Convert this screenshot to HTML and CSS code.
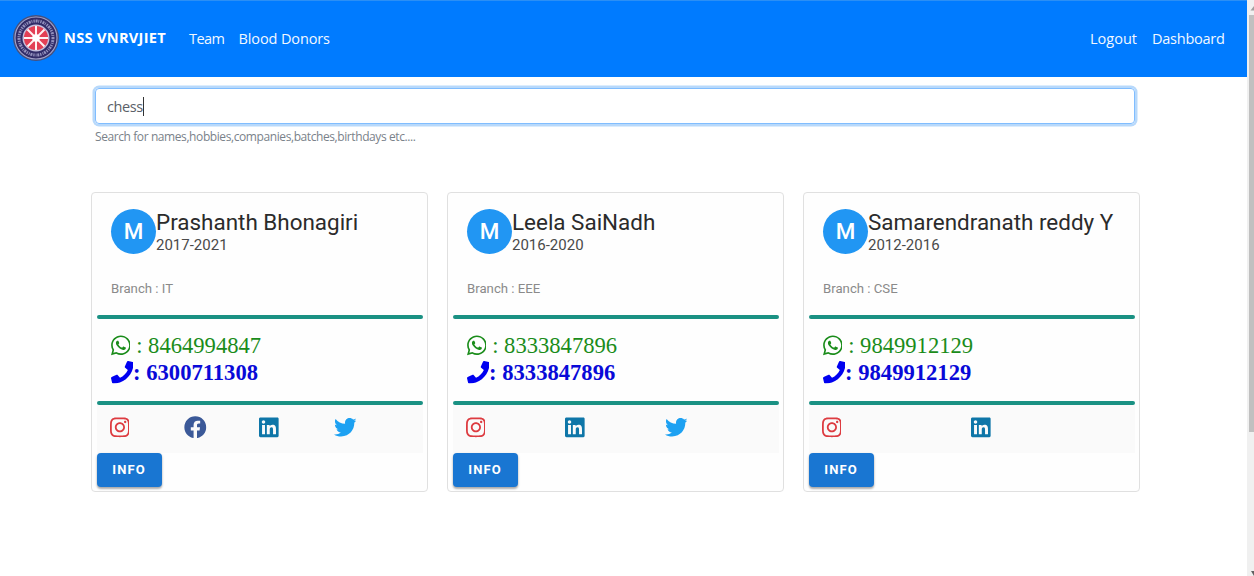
FILE: index.html
```html
<!DOCTYPE html>
<html lang="en">
<head>
<meta charset="utf-8">
<title>NSS VNRVJIET</title>
<link rel="stylesheet" href="styles.css">
</head>
<body>
<svg class="sprite" aria-hidden="true">
  <symbol id="whatsapp" viewBox="0 0 448 512"><path d="M380.9 97.1C339 55.1 283.2 32 223.9 32c-122.4 0-222 99.6-222 222 0 39.1 10.2 77.3 29.6 111L0 480l117.7-30.9c32.4 17.7 68.9 27 106.1 27h.1c122.3 0 224.1-99.6 224.1-222 0-59.3-25.2-115-67.1-157zm-157 341.6c-33.2 0-65.7-8.9-94-25.7l-6.7-4-69.8 18.3L72 359.2l-4.4-7c-18.5-29.4-28.2-63.3-28.2-98.2 0-101.7 82.8-184.5 184.6-184.5 49.3 0 95.6 19.2 130.4 54.1 34.8 34.9 56.2 81.2 56.1 130.5 0 101.8-84.9 184.6-186.6 184.6zm101.2-138.2c-5.5-2.8-32.8-16.2-37.9-18-5.1-1.9-8.8-2.8-12.5 2.8-3.7 5.6-14.3 18-17.6 21.8-3.2 3.7-6.5 4.2-12 1.4-32.6-16.3-54-29.1-75.5-66-5.7-9.8 5.7-9.1 16.3-30.3 1.8-3.7.9-6.9-.5-9.7-1.4-2.8-12.5-30.1-17.1-41.2-4.5-10.8-9.1-9.3-12.5-9.5-3.2-.2-6.9-.2-10.6-.2-3.7 0-9.7 1.4-14.8 6.9-5.1 5.6-19.4 19-19.4 46.3 0 27.3 19.9 53.7 22.6 57.4 2.8 3.7 39.1 59.7 94.8 83.8 35.2 15.2 49 16.5 66.6 13.9 10.7-1.6 32.8-13.4 37.4-26.4 4.6-13 4.6-24.1 3.2-26.4-1.3-2.5-5-3.9-10.5-6.6z"/></symbol>
  <symbol id="phone" viewBox="0 0 512 512"><path d="M493.4 24.6l-104-24c-11.3-2.6-22.9 3.3-27.5 13.9l-48 112c-4.2 9.8-1.4 21.3 6.9 28l60.6 49.6c-36 76.7-98.9 140.5-177.2 177.2l-49.6-60.6c-6.8-8.3-18.2-11.1-28-6.9l-112 48C3.9 366.5-2 378.1.6 389.4l24 104C27.1 504.2 36.7 512 48 512c256.1 0 464-207.5 464-464 0-11.2-7.7-20.9-18.6-23.4z"/></symbol>
  <symbol id="instagram" viewBox="0 0 448 512"><path d="M224.1 141c-63.6 0-114.9 51.3-114.9 114.9s51.3 114.9 114.9 114.9S339 319.5 339 255.9 287.7 141 224.1 141zm0 189.600c-41.100 0-74.700-33.500-74.700-74.700s33.500-74.700 74.700-74.700 74.700 33.500 74.700 74.700-33.600 74.700-74.700 74.700zm146.400-194.300c0 14.900-12 26.800-26.800 26.800-14.900 0-26.800-12-26.800-26.800s12-26.800 26.800-26.800 26.800 12 26.800 26.800zm76.100 27.200c-1.700-35.900-9.900-67.700-36.200-93.900-26.200-26.200-58-34.400-93.900-36.200-37-2.100-147.900-2.100-184.900 0-35.800 1.700-67.600 9.900-93.900 36.100s-34.400 58-36.200 93.900c-2.100 37-2.100 147.900 0 184.900 1.700 35.900 9.900 67.700 36.200 93.900s58 34.400 93.900 36.200c37 2.100 147.900 2.100 184.900 0 35.900-1.700 67.700-9.900 93.900-36.200 26.200-26.200 34.400-58 36.200-93.900 2.100-37 2.100-147.800 0-184.800zM398.800 388c-7.800 19.600-22.900 34.700-42.600 42.600-29.500 11.700-99.500 9-132.100 9s-102.700 2.600-132.100-9c-19.600-7.800-34.700-22.900-42.600-42.600-11.700-29.500-9-99.500-9-132.100s-2.600-102.700 9-132.100c7.800-19.600 22.900-34.700 42.600-42.600 29.500-11.700 99.500-9 132.100-9s102.700-2.600 132.100 9c19.600 7.800 34.700 22.900 42.600 42.600 11.700 29.500 9 99.500 9 132.100s2.700 102.700-9 132.100z"/></symbol>
  <symbol id="facebook" viewBox="0 0 512 512"><path d="M504 256C504 119 393 8 256 8S8 119 8 256c0 123.780 90.690 226.380 209.250 245V327.690h-63V256h63v-54.640c0-62.150 37-96.480 93.670-96.480 27.140 0 55.520 4.840 55.520 4.840v61h-31.280c-30.800 0-40.410 19.120-40.410 38.730V256h68.780l-11 71.690h-57.780V501C413.310 482.380 504 379.780 504 256z"/></symbol>
  <symbol id="linkedin" viewBox="0 0 448 512"><path d="M416 32H31.900C14.300 32 0 46.500 0 64.300v383.400C0 465.500 14.300 480 31.900 480H416c17.600 0 32-14.500 32-32.300V64.300c0-17.800-14.400-32.300-32-32.300zM135.400 416H69V202.200h66.500V416zm-33.200-243c-21.300 0-38.500-17.300-38.500-38.500S80.900 96 102.200 96c21.200 0 38.500 17.300 38.500 38.500 0 21.300-17.200 38.500-38.500 38.500zm282.100 243h-66.400V312c0-24.800-.5-56.700-34.500-56.700-34.600 0-39.900 27-39.900 54.900V416h-66.400V202.200h63.700v29.200h.9c8.900-16.800 30.600-34.500 62.900-34.500 67.200 0 79.700 44.300 79.700 101.900V416z"/></symbol>
  <symbol id="twitter" viewBox="0 0 512 512"><path d="M459.370 151.716c.325 4.548.325 9.097.325 13.645 0 138.720-105.583 298.558-298.558 298.558-59.452 0-114.680-17.219-161.137-47.106 8.447.974 16.568 1.299 25.340 1.299 49.055 0 94.213-16.568 130.274-44.832-46.132-.975-84.792-31.188-98.112-72.772 6.498.974 12.995 1.624 19.818 1.624 9.421 0 18.843-1.300 27.614-3.573-48.081-9.747-84.143-51.980-84.143-102.985v-1.299c13.969 7.797 30.214 12.670 47.431 13.319-28.264-18.843-46.781-51.005-46.781-87.391 0-19.492 5.197-37.360 14.294-52.954 51.655 63.675 129.300 105.258 216.365 109.807-1.624-7.797-2.599-15.918-2.599-24.040 0-57.828 46.782-104.934 104.934-104.934 30.213 0 57.502 12.670 76.670 33.137 23.715-4.548 46.456-13.320 66.599-25.340-7.798 24.366-24.366 44.833-46.132 57.827 21.117-2.273 41.584-8.122 60.426-16.243-14.292 20.791-32.161 39.308-52.628 54.253z"/></symbol>
</svg>

<div class="window">
  <div class="page">
    <nav class="navbar">
      <a class="brand">
        <svg class="logo" viewBox="0 0 46 46">
          <circle cx="23" cy="23" r="23" fill="#45517f"/>
          <circle cx="23" cy="23" r="21" fill="#312c68" stroke="#a5a4cb" stroke-width="1.1"/>
          <circle class="motto" cx="23" cy="23" r="17"/>
          <circle cx="23" cy="23" r="12.8" fill="#e33f55" stroke="#c5bfdc" stroke-width="1.4"/>
          <g stroke="#fff1f3" stroke-width="2">
            <path d="M23 11v24M11 23h24M14.500 14.500l17 17M31.500 14.500l-17 17"/>
          </g>
          <circle cx="23" cy="23" r="3.8" fill="#fff"/>
        </svg>
        <span class="brand-name">NSS VNRVJIET</span>
      </a>
      <a class="link team">Team</a>
      <a class="link donors">Blood Donors</a>
      <a class="link logout">Logout</a>
      <a class="link dashboard">Dashboard</a>
    </nav>

    <main class="content">
      <div class="search"><span class="query">chess</span><span class="caret"></span></div>
      <p class="hint">Search for names,hobbies,companies,batches,birthdays etc....</p>

      <div class="cards">
        <article class="card">
          <header class="person">
            <div class="avatar">M</div>
            <div class="who"><h2 class="name">Prashanth Bhonagiri</h2><div class="years">2017-2021</div></div>
          </header>
          <div class="branch">Branch : IT</div>
          <div class="bar"></div>
          <div class="contact">
            <div class="line whatsapp"><svg class="ic"><use href="#whatsapp"/></svg><span class="num">: 8464994847</span></div>
            <div class="line phone"><svg class="ic wide"><use href="#phone"/></svg><span>: 6300711308</span></div>
          </div>
          <div class="bar"></div>
          <div class="social">
            <svg class="ic insta"><use href="#instagram"/></svg>
            <svg class="ic wide fb"><use href="#facebook"/></svg>
            <svg class="ic in"><use href="#linkedin"/></svg>
            <svg class="ic wide tw"><use href="#twitter"/></svg>
          </div>
          <button class="info">INFO</button>
        </article>

        <article class="card">
          <header class="person">
            <div class="avatar">M</div>
            <div class="who"><h2 class="name">Leela SaiNadh</h2><div class="years">2016-2020</div></div>
          </header>
          <div class="branch">Branch : EEE</div>
          <div class="bar"></div>
          <div class="contact">
            <div class="line whatsapp"><svg class="ic"><use href="#whatsapp"/></svg><span class="num">: 8333847896</span></div>
            <div class="line phone"><svg class="ic wide"><use href="#phone"/></svg><span>: 8333847896</span></div>
          </div>
          <div class="bar"></div>
          <div class="social">
            <svg class="ic insta"><use href="#instagram"/></svg>
            <svg class="ic in"><use href="#linkedin"/></svg>
            <svg class="ic wide tw"><use href="#twitter"/></svg>
          </div>
          <button class="info">INFO</button>
        </article>

        <article class="card">
          <header class="person">
            <div class="avatar">M</div>
            <div class="who"><h2 class="name">Samarendranath reddy Y</h2><div class="years">2012-2016</div></div>
          </header>
          <div class="branch">Branch : CSE</div>
          <div class="bar"></div>
          <div class="contact">
            <div class="line whatsapp"><svg class="ic"><use href="#whatsapp"/></svg><span class="num">: 9849912129</span></div>
            <div class="line phone"><svg class="ic wide"><use href="#phone"/></svg><span>: 9849912129</span></div>
          </div>
          <div class="bar"></div>
          <div class="social">
            <svg class="ic insta"><use href="#instagram"/></svg>
            <svg class="ic in"><use href="#linkedin"/></svg>
          </div>
          <button class="info">INFO</button>
        </article>
      </div>
    </main>
  </div>

  <div class="scrollbar">
    <svg class="arrow" viewBox="0 0 7 15"><path d="M3.500 10.500L7 6v4.500z" fill="#a0a0a0"/></svg>
    <div class="thumb"></div>
    <svg class="arrow" viewBox="0 0 7 5"><path d="M4 0h3v5z" fill="#606060"/></svg>
  </div>
</div>
</body>
</html>
```
FILE: styles.css
```css
* { box-sizing: border-box; }
body { margin: 0; background: #fff; overflow: hidden; font-family: "Open Sans", "Noto Sans", sans-serif; }
.sprite { display: none; }
.window { display: flex; width: 1254px; height: 576px; }
.page { width: 1247px; }

.navbar { display: flex; align-items: center; height: 76.500px; padding: 0 23px 1px 13px; background: #007bff; border-top: 1px solid #2b8ff5; color: #fff; }
.brand { display: flex; align-items: center; gap: 5px; width: 176px; }
.logo { width: 46px; height: 46px; flex: none; }
.motto { fill: none; stroke: #9391bd; stroke-width: 3; stroke-dasharray: 1.300 .9 2 .8 .9 1.100; }
.brand-name { font-size: 14.600px; font-weight: 700; letter-spacing: .3px; line-height: 20px; margin-top: -2px; white-space: nowrap; }
.link { font-size: 14.500px; line-height: 20px; letter-spacing: -.12px; white-space: nowrap; margin-top: 1px; color: #f2f8ff; }
.team { width: 49.500px; letter-spacing: -.6px; }
.logout { margin-left: auto; width: 62px; letter-spacing: 0; }
.dashboard { width: 72px; letter-spacing: -.25px; }

.content { padding: 11px 107px 0 91px; }
.search { display: flex; align-items: center; height: 36.500px; margin: 0 5px 0 4px; padding: 2px 11px 0; border: 1px solid #80bdff; border-radius: 4px; box-shadow: 0 0 0 2.500px #b8d9fb; color: #5a6068; }
.query { font-size: 14.500px; line-height: 20px; letter-spacing: -.4px; }
.caret { width: 1px; height: 19px; background: #333; }
.hint { margin: 4px 0 0 4px; font-size: 12px; line-height: 18px; letter-spacing: -.41px; color: #7a828a; white-space: nowrap; }

.cards { display: grid; grid-template-columns: repeat(3, 337px); gap: 19px; margin-top: 46px; }
.card { display: flex; flex-direction: column; height: 300px; padding: 4.500px 4.500px 0; border: 1px solid #e0e0e0; border-radius: 4px; font-family: Roboto, sans-serif; background: #fefefe; }
.person { display: flex; padding: 11px 0 0 14.500px; height: 76px; }
.avatar { display: flex; align-items: center; justify-content: center; width: 45px; height: 45px; border-radius: 50%; background: #2196f3; color: #fff; font-size: 22.400px; font-weight: 500; }
.name { margin: 0; font-size: 22.450px; font-weight: 400; line-height: 27px; color: #2b2b2b; white-space: nowrap; }
.years { font-size: 15px; line-height: 19px; color: #4a4a4a; }
.branch { height: 41px; padding-left: 14.500px; font-size: 13.200px; line-height: 30px; color: #8a8a8a; }
.bar { height: 4px; border-radius: 2px; background: #1a9183; flex: none; }
.contact { height: 82px; padding: 14px 0 0 14px; font-family: "Liberation Serif", serif; font-size: 22.600px; }
.line { display: flex; align-items: center; height: 26.500px; white-space: pre; }
.whatsapp { color: #1a8c1a; }
.phone { color: #0909d8; font-weight: 700; }
.phone .ic { color: #0000f0; }
.line span { padding-top: 1px; }
.num { margin-left: 5.900px; }
.ic { display: block; width: 19.800px; height: 22.600px; fill: currentColor; flex: none; }
.wide { width: 22.600px; }
.social { display: grid; grid-auto-flow: column; grid-auto-columns: 1fr; height: 48px; padding: 11px 14px 0 13px; background: #fafafa; }
.insta { color: #dd3b40; }
.fb { color: #3b5998; }
.in { color: #0e76a8; }
.tw { color: #1da1f2; }
.info { width: 65px; height: 34px; padding: 0; border: 0; border-radius: 4px; background: #1976d2; color: #fff; font: 700 13px/34px Roboto, sans-serif; letter-spacing: 1.100px; box-shadow: 0 2px 2px rgba(0, 0, 0, .25), 0 1px 3px rgba(0, 0, 0, .15); }

.scrollbar { display: flex; flex-direction: column; width: 7px; background: #f0f0f0; }
.arrow { width: 7px; height: 15px; flex: none; }
.arrow:last-child { height: 5px; margin-top: auto; }
.thumb { height: 417px; margin-left: 2px; background: #c0c0c0; }
```
